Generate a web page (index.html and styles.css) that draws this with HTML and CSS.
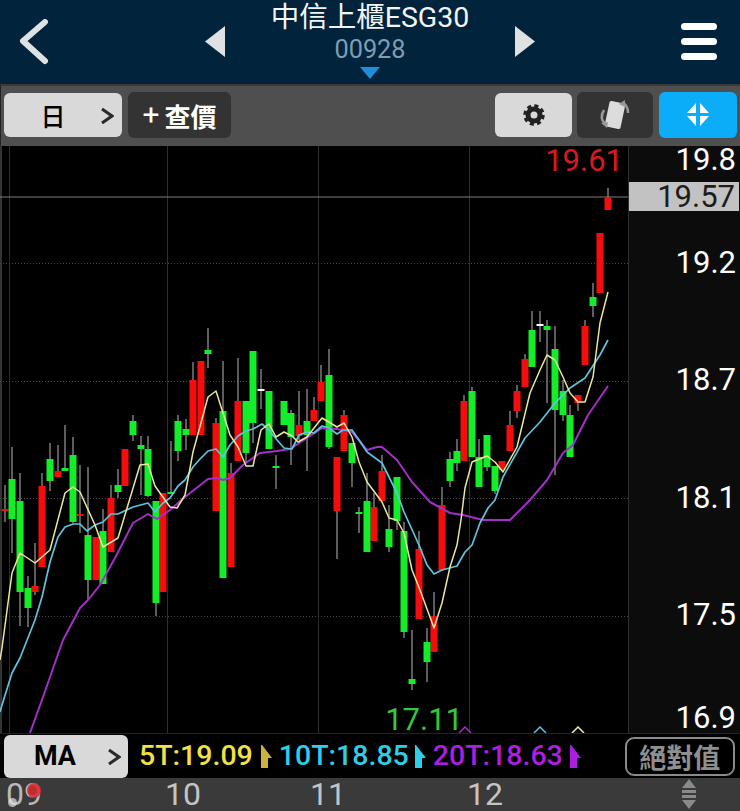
FILE: index.html
```html
<!DOCTYPE html>
<html lang="zh-Hant">
<head>
<meta charset="utf-8">
<title>中信上櫃ESG30</title>
<link rel="stylesheet" href="styles.css">
</head>
<body>
<div class="app">
  <header class="hdr">
    <svg class="ico-back" viewBox="0 0 30 46"><path d="M26 3 L4 22 L26 42"/></svg>
    <svg class="ico-prev" viewBox="0 0 20 32"><path d="M0 15.500 L20 0 V31 Z"/></svg>
    <div class="title">
      <div class="name">中信上櫃ESG30</div>
      <div class="code">00928</div>
      <div class="caret"></div>
    </div>
    <svg class="ico-next" viewBox="0 0 20 32"><path d="M0 0 L20 15.500 L0 31 Z"/></svg>
    <div class="menu"><span></span><span></span><span></span></div>
  </header>

  <div class="toolbar">
    <button class="btn light day">日<svg class="chev" viewBox="0 0 14 18"><path d="M2 2 L12 9 L2 16"/></svg></button>
    <button class="btn dark quote"><span class="plus">+</span>查價</button>
    <span class="grow"></span>
    <button class="btn light gear">
      <svg viewBox="0 0 24 24" width="24" height="24"><circle class="g1" cx="12" cy="12" r="6"/><circle class="g2" cx="12" cy="12" r="9"/></svg>
    </button>
    <button class="btn dark rotate">
      <svg viewBox="0 0 36 34" width="36" height="34">
        <rect class="phone" x="10" y="4" width="16" height="26" rx="2" transform="rotate(12 18 17)"/>
        <path class="arc" d="M7 12 C4 17 4 22 8 26"/><path class="tip" d="M4 25 L11 24 L10 30 Z"/>
        <path class="arc" d="M25 5 C29 6 31 10 31 15"/><path class="tip" d="M22 6 L28 2 L28 9 Z"/>
      </svg>
    </button>
    <button class="btn blue shrink">
      <svg viewBox="0 0 24 24" width="24" height="24"><path d="M10 0 V10 H1 Z M14 0 V10 H23 Z M10 13 H1 L10 23 Z M14 13 H23 L14 23 Z"/></svg>
    </button>
  </div>

  <div class="main">
    <svg class="chart" viewBox="0 146 628 587" width="628" height="587">
      <path class="edge" d="M1 146 V733"/>
      <path class="vgrid" d="M9.500 146 V733 M167.500 146 V733 M318.500 146 V733 M469.500 146 V733"/>
      <path class="hgrid" d="M0 263.500 H628 M0 381.500 H628 M0 498.500 H628 M0 616.500 H628"/>
      <path class="last" d="M0 197 H628"/>
      <path class="wick" d="M5 485V522M12 447V553M20 473V626M28 576V627M35 543V595M42 473V567M50 443V491M58 445V477M65 425V471M73 437V523M80 465V533M88 467V600M96 537V580M103 509V584M111 485V552M118 469V498M133 415V441M141 436V495M148 436V497M156 501V616M171 441V493M178 415V461M186 419V450M193 362V435M208 328V368M216 418V511M223 361V578M231 463V567M238 358V461M246 401V463M253 351V443M261 369V409M276 455V489M291 410V465M299 391V440M307 389V471M314 397V421M321 365V401M329 349V449M337 457V559M344 410V451M352 443V487M359 507V533M367 473V552M374 493V541M382 455V501M389 505V552M397 477V530M404 522V638M412 630V690M419 531V619M427 628V682M434 592V652M442 487V570M450 452V487M457 439V471M464 395V461M472 387V457M479 439V487M487 435V471M495 466V494M502 461V470M510 411V451M517 385V418M525 354V387M532 311V367M540 311V342M547 320V403M555 326V475M563 380V421M570 405V457M578 395V411M585 320V365M593 283V317M608 188V210"/>
      <path class="up" d="M5 509V511M35 586V592M42 486V567M58 471V477M80 514V516M96 537V580M111 498V552M125 449V486M163 493V592M193 380V435M201 361V435M216 423V511M231 473V567M238 401V461M299 425V436M314 410V421M321 382V401M337 457V511M344 415V451M374 507V541M382 471V501M419 549V619M434 616V652M442 505V570M464 401V461M502 461V470M510 425V451M517 391V411M525 359V387M578 395V403M585 326V365M600 233V293M608 197V210"/>
      <path class="down" d="M12 479V519M20 501V592M28 588V608M50 459V481M65 468V471M73 455V522M88 535V580M103 531V584M118 485V492M133 421V435M141 445V449M148 449V496M156 501V603M171 492V494M178 421V451M186 429V435M208 350V354M223 411V578M246 401V453M253 351V423M269 391V449M276 466V468M284 401V425M291 413V437M307 421V435M329 375V447M352 443V463M359 512V514M367 501V552M389 529V547M397 477V521M404 531V632M412 679V684M427 642V662M450 459V481M457 451V463M472 391V457M479 457V487M487 435V467M495 466V491M532 330V367M547 326V330M555 349V410M563 391V415M570 415V457M593 297V306"/>
      <path class="flat" d="M261 389V391M540 324V326"/>
      <polyline class="ma20" points="30,733 43,697 63,640 80,608 88,600 100,585 115,558 133,523 148,514 157,519 170,510 185,497 208,479 217,478 223,480 230,478 243,465 260,453 277,451 290,449 307,438 322,428 337,429 352,432 367,450 377,447 382,447 397,460 412,482 430,502 450,513 463,515 483,520 510,520 530,500 547,480 563,453 573,445 588,415 608,386"/>
      <polyline class="ma10" points="0,712 2,705 12,673 20,658 35,620 42,597 50,562 58,537 65,527 73,524 80,524 87,531 95,525 103,522 111,514 118,514 133,507 148,503 155,512 163,503 170,498 178,486 185,480 193,467 200,459 208,451 216,449 223,457 230,445 238,436 246,431 253,429 262,424 268,429 277,440 284,448 292,449 299,435 307,432 314,433 322,426 329,428 337,434 343,430 352,430 359,440 367,452 382,463 389,477 397,493 404,512 419,545 427,565 434,574 442,570 457,566 465,552 472,545 480,523 488,508 495,500 503,477 525,438 540,422 555,403 570,388 585,378 600,355 608,340"/>
      <polyline class="ma5" points="0,660 2,648 12,573 20,553 35,563 50,550 65,493 73,487 80,492 95,525 103,547 118,538 140,465 148,464 155,486 170,507 177,508 185,495 193,452 208,397 216,391 230,435 238,447 246,466 253,466 261,430 269,424 276,437 284,432 292,436 298,442 307,437 314,428 322,418 337,427 344,423 352,437 359,462 367,482 382,502 389,518 397,520 404,533 412,570 420,590 434,628 442,603 450,567 457,545 461,520 465,488 472,462 487,456 495,462 503,472 517,447 530,393 540,370 547,355 555,360 563,377 570,393 578,402 585,402 593,377 600,323 608,292"/>
      <path class="mk5" d="M572 733 L578 727 L584 733"/>
      <path class="mk10" d="M534 733 L540 727 L546 733"/>
      <path class="mk20" d="M459 733 L465 727 L471 733"/>
      <text class="hi" x="623" y="171">19.61</text>
      <text class="lo" x="463" y="730">17.11</text>
    </svg>
    <div class="axis">
      <div class="tick t1">19.8</div>
      <div class="tag">19.57</div>
      <div class="tick t2">19.2</div>
      <div class="tick t3">18.7</div>
      <div class="tick t4">18.1</div>
      <div class="tick t3">17.5</div>
      <div class="tick t5">16.9</div>
    </div>
  </div>

  <div class="legend">
    <button class="btn light ma">MA<svg class="chev" viewBox="0 0 14 18"><path d="M2 2 L12 9 L2 16"/></svg></button>
    <span class="lg y">5T:19.09</span>
    <svg class="flag fy" viewBox="0 0 11 23"><path d="M0 0 H1 L11 13 H7 V23 H0 Z"/></svg>
    <span class="lg c">10T:18.85</span>
    <svg class="flag fc" viewBox="0 0 11 23"><path d="M0 0 H1 L11 13 H7 V23 H0 Z"/></svg>
    <span class="lg p">20T:18.63</span>
    <svg class="flag fp" viewBox="0 0 11 23"><path d="M0 0 H1 L11 13 H7 V23 H0 Z"/></svg>
    <button class="abs">絕對值</button>
  </div>

  <div class="xaxis">
    <span class="x09">09<i class="dot-r"></i><i class="dot-w"></i></span>
    <span>10</span>
    <span>11</span>
    <span>12</span>
    <svg class="sorter" viewBox="0 0 14 31"><path d="M7 0 L14 9 H0 Z M0 11 H14 V14 H0 Z M0 16 H14 V19 H0 Z M0 21 H14 L7 30 Z"/></svg>
  </div>
</div>
</body>
</html>
```
FILE: styles.css
```css
* { box-sizing: border-box; }
html, body { margin: 0; padding: 0; background: #000; }
body { width: 740px; height: 811px; overflow: hidden; font-family: Roboto, "Noto Sans CJK TC", sans-serif; }
.app { display: flex; flex-direction: column; width: 740px; height: 811px; }

/* header */
.hdr { display: flex; align-items: flex-start; height: 84px; background: #01233b; flex: none; }
.hdr svg { flex: none; }
.ico-back { width: 30px; height: 46px; margin: 19px 0 0 19px; }
.ico-back path { fill: none; stroke: #dfe2e4; stroke-width: 6; stroke-linecap: round; stroke-linejoin: round; }
.ico-prev { width: 20px; height: 32px; margin: 26px 0 0 156px; fill: #dfe1e3; }
.ico-next { width: 20px; height: 32px; margin: 26px 0 0 0; fill: #dfe1e3; }
.title { width: 290px; display: flex; flex-direction: column; align-items: center; }
.name { font-size: 28.500px; line-height: 34px; color: #f2f4f5; margin-top: 1px; white-space: nowrap; }
.code { font-size: 25.300px; line-height: 28px; color: #7f9db2; margin-top: 1px; }
.caret { width: 0; height: 0; border-left: 10px solid transparent; border-right: 10px solid transparent; border-top: 12px solid #1e8fd8; margin-top: 3px; margin-left: -1px; }
.menu { display: flex; flex-direction: column; gap: 8px; width: 36px; margin: 23px 0 0 146px; }
.menu span { display: block; height: 7px; border-radius: 4px; background: #fff; }

/* toolbar */
.toolbar { display: flex; align-items: center; height: 62px; flex: none; background: #4f4f4f; border-top: 2px solid #3a3a3a; border-left: 1px solid #222; padding: 0 3px 2px 3px; }
.btn { border: 0; padding: 0; display: flex; align-items: center; justify-content: center; border-radius: 6px; font-family: Roboto, "Noto Sans CJK TC", sans-serif; position: relative; }
.light { background: #d9d9d9; color: #000; }
.dark { background: #333; color: #fff; }
.blue { background: #0bacf8; }
.grow { flex: 1; }
.day { width: 118px; height: 44px; font-size: 25px; font-weight: 500; padding-right: 20px; }
.chev { position: absolute; width: 14px; height: 18px; right: 8px; top: 14px; }
.chev path { fill: none; stroke: #2a2a2a; stroke-width: 3; }
.quote { width: 103px; height: 46px; margin-left: 6px; font-size: 26px; font-weight: 700; }
.plus { font-weight: 400; margin-right: 5px; font-size: 30px; line-height: 28px; }
.gear { width: 77px; height: 44px; }
.g1 { fill: none; stroke: #222; stroke-width: 5; }
.g2 { fill: none; stroke: #222; stroke-width: 3.500; stroke-dasharray: 4 3.070; }
.rotate { width: 76px; height: 46px; margin-left: 5px; }
.phone { fill: #dcdcdc; }
.arc { fill: none; stroke: #9a9a9a; stroke-width: 2.500; }
.tip { fill: #9a9a9a; }
.shrink { width: 78px; height: 46px; margin-left: 6px; }
.shrink svg { fill: #fff; }

/* chart */
.main { display: flex; height: 587px; flex: none; background: #000; }
.chart { display: block; flex: none; background: #000; overflow: visible; }
.edge { stroke: #333; stroke-width: 2; }
.vgrid { stroke: #2e2e2e; stroke-width: 1; }
.hgrid { stroke: #4a4a4a; stroke-width: 1; stroke-dasharray: 1 2; }
.last { stroke: #7d7d7d; stroke-width: 1; }
.wick { stroke: #8f8f8f; stroke-width: 1.300; }
.up { stroke: #f50d0d; stroke-width: 7; }
.down { stroke: #14ee2a; stroke-width: 7; }
.flat { stroke: #fff; stroke-width: 7; }
polyline { fill: none; stroke-linejoin: round; }
.ma5 { stroke: #ece79c; stroke-width: 1.500; }
.ma10 { stroke: #5fc3de; stroke-width: 1.700; }
.ma20 { stroke: #a22fc6; stroke-width: 2; }
.mk5, .mk10, .mk20 { fill: none; stroke-width: 1.500; }
.mk5 { stroke: #f3eea0; }
.mk10 { stroke: #5fc3de; }
.mk20 { stroke: #a22fc6; }
.hi, .lo { font-family: Roboto, sans-serif; font-size: 31px; text-anchor: end; }
.hi { fill: #d81a1e; }
.lo { fill: #35c83a; }

/* price axis */
.axis { width: 112px; flex: none; display: flex; flex-direction: column; background: #0c0c0c; border-left: 1px solid #2e2e2e; }
.tick { height: 30px; line-height: 30px; font-size: 31px; text-align: right; color: #fff; padding-right: 4px; }
.t1 { margin-top: -1px; }
.t2 { margin-top: 37px; }
.t3 { margin-top: 87px; }
.t4 { margin-top: 88px; }
.t5 { margin-top: 73px; }
.tag { height: 29px; line-height: 29px; margin-top: 7px; margin-right: 1px; font-size: 31px; text-align: right; padding-right: 4px; color: #1c1c1c; background: #c2c2c2; }

/* legend */
.legend { display: flex; align-items: center; height: 45px; flex: none; background: #000; border-top: 1px solid #222; padding-left: 4px; }
.ma { width: 124px; height: 43px; font-size: 27px; font-weight: 700; padding-right: 22px; }
.ma .chev { top: 13px; right: 7px; }
.lg { font-size: 28.500px; font-weight: 500; line-height: 34px; }
.y { color: #f1e244; margin-left: 11px; }
.c { color: #2fcde8; margin-left: 7px; }
.p { color: #ad1fe0; margin-left: 7px; }
.flag { width: 11px; height: 23px; margin-left: 8px; flex: none; }
.fy { fill: #cdb23c; }
.fc { fill: #2fcde8; margin-left: 6px; }
.fp { fill: #ad1fe0; margin-left: 7px; }
.abs { width: 110px; height: 39px; margin-left: 44px; padding: 0; background: #000; border: 2px solid #8a8a8a; border-radius: 9px; color: #8f8f8f; font-family: "Noto Sans CJK TC", sans-serif; font-size: 27px; font-weight: 700; line-height: 33px; }

/* time axis */
.xaxis { display: grid; grid-template-columns: 159px 145px 157px 215px 14px; align-items: center; height: 33px; flex: none; padding-left: 6px; background: #3a3a3a; color: #c4c4c4; font-size: 32px; line-height: 33px; }
.x09 { position: relative; display: block; color: #b9b9b9; }
.dot-r { position: absolute; left: 21px; top: 5px; width: 14px; height: 15px; border-radius: 50%; background: rgba(220, 40, 45, 0.85); }
.dot-w { position: absolute; left: 2px; top: 20px; width: 9px; height: 9px; border-radius: 50%; background: rgba(225, 225, 225, 0.7); }
.sorter { width: 14px; height: 31px; fill: #8a8a8a; display: block; }
```
